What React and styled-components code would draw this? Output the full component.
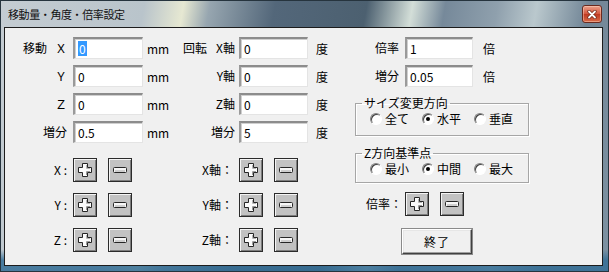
import React from "react";
import styled, { createGlobalStyle } from "styled-components";

const GlobalStyle = createGlobalStyle`
  html, body {
    margin: 0;
    padding: 0;
    background: #6d7f8d;
  }
  body {
    font-family: "Noto Sans CJK JP", "Liberation Sans", sans-serif;
    font-size: 12px;
    color: #000;
  }
`;

const Window = styled.div`
  width: 609px;
  height: 272px;
  box-sizing: border-box;
  display: flex;
  flex-direction: column;
  border: 1px solid #26343e;
  padding: 0 5px 5px 3px;
  background:
    linear-gradient(180deg, rgba(0, 0, 0, 0) 92%, rgba(52, 110, 150, 0.85) 96%),
    linear-gradient(
      100deg,
      #c4ccd2 0%,
      #b9c4cb 22%,
      #e6e8d2 28%,
      #97a6b0 32%,
      #53677a 42%,
      #4c6070 56%,
      #d3ded8 63%,
      #76899a 68%,
      #8fa0ad 76%,
      #bac8cd 82%,
      #718596 90%,
      #7e92a2 100%
    );
`;

const TitleBar = styled.div`
  height: 26px;
  display: flex;
  align-items: flex-start;
  justify-content: space-between;
  padding-left: 4px;
`;

const Title = styled.div`
  margin-top: 5px;
  font-size: 11px;
  line-height: 16px;
  letter-spacing: -0.4px;
  color: #111;
`;

const CloseButton = styled.div`
  width: 20px;
  height: 18px;
  margin-top: 4px;
  margin-right: 1px;
  box-sizing: border-box;
  border: 1px solid #6b2a1f;
  border-radius: 3px;
  display: flex;
  align-items: center;
  justify-content: center;
  background: linear-gradient(180deg, #eca28c 0%, #d4583f 48%, #bf3a22 52%, #d86a47 100%);
  box-shadow: inset 0 0 0 1px rgba(255, 220, 200, 0.45);
`;

const Client = styled.div`
  flex: 1;
  display: flex;
  box-sizing: border-box;
  border: 1px solid #1c1c1c;
  background: #f0f0f0;
  padding-top: 9px;
`;

const LeftPanel = styled.div`
  width: 345px;
  display: flex;
  flex-direction: column;
`;

const FieldGrid = styled.div`
  display: grid;
  grid-template-columns: 68px 70px 38px 58px 69px 1fr;
  grid-auto-rows: 22px;
  row-gap: 6px;
`;

const StepGrid = styled.div`
  display: grid;
  grid-template-columns: 68px 108px 58px 1fr;
  grid-auto-rows: 24px;
  row-gap: 11px;
  margin-top: 15px;
`;

const Label = styled.div`
  display: flex;
  align-items: center;
  justify-content: ${(p) => (p.$split ? "space-between" : "flex-end")};
  gap: 8px;
  padding-right: ${(p) => p.$pr ?? 6}px;
  padding-left: ${(p) => (p.$split ? 2 : 0)}px;
  white-space: nowrap;
  line-height: 16px;
`;

const Unit = styled.div`
  display: flex;
  align-items: center;
  padding-left: ${(p) => p.$pl}px;
  white-space: nowrap;
`;

const TextBox = styled.div`
  box-sizing: border-box;
  height: 22px;
  width: ${(p) => p.$w}px;
  display: flex;
  align-items: center;
  padding-left: 3px;
  background: #fff;
  border-style: solid;
  border-width: 2px 1px 1px 2px;
  border-color: #8c8c8c #e4e4e4 #e4e4e4 #9a9a9a;
  box-shadow: inset 1px 1px 0 #cfcfcf;
  font-size: 12px;
`;

const Selected = styled.span`
  background: #3399ff;
  color: #fff;
  line-height: 15px;
  padding: 0 1px;
`;

const Buttons = styled.div`
  display: flex;
  gap: 11px;
`;

const IconButton = styled.div`
  width: 24px;
  height: 24px;
  box-sizing: border-box;
  display: flex;
  align-items: center;
  justify-content: center;
  background: #c2c2c2;
  border: 1px solid #2b2b2b;
  box-shadow: inset 1px 1px 0 #f4f4f4, inset -1px -1px 0 #7c7c7c;
`;

const RightPanel = styled.div`
  display: flex;
  flex-direction: column;
`;

const RateGrid = styled.div`
  display: grid;
  grid-template-columns: 55px 68px 1fr;
  grid-auto-rows: 22px;
  row-gap: 6px;
`;

const GroupBox = styled.fieldset`
  box-sizing: border-box;
  width: 174px;
  height: ${(p) => p.$h}px;
  margin: ${(p) => p.$mt}px 0 0 5px;
  padding: 0 0 0 6px;
  border: 1px solid #a6a6a6;
  box-shadow: inset 1px 1px 0 #fff, 1px 1px 0 #fff;
`;

const Legend = styled.legend`
  padding: 0 2px;
  font-size: 12px;
  line-height: 14px;
`;

const RadioRow = styled.div`
  display: flex;
  height: 14px;
  margin-top: ${(p) => p.$mt}px;
  padding-left: 8px;
`;

const RadioItem = styled.div`
  width: 52px;
  height: 14px;
  display: flex;
  align-items: center;
  gap: 3px;
  white-space: nowrap;
  line-height: 14px;
`;

const RadioCircle = styled.span`
  width: 12px;
  height: 12px;
  box-sizing: border-box;
  border-radius: 50%;
  background: #fff;
  border: 1px solid;
  border-color: #808080 #fff #fff #808080;
  box-shadow: inset 1px 1px 0 #404040;
  display: flex;
  align-items: center;
  justify-content: center;
  &::after {
    content: "";
    width: 4px;
    height: 4px;
    border-radius: 50%;
    background: ${(p) => (p.$checked ? "#000" : "transparent")};
  }
`;

const RateStep = styled.div`
  display: grid;
  grid-template-columns: 55px 1fr;
  height: 24px;
  margin-top: 9px;
`;

const EndButton = styled.div`
  width: 70px;
  height: 25px;
  box-sizing: border-box;
  margin: 13px 0 0 52px;
  display: flex;
  align-items: center;
  justify-content: center;
  background: #f0f0f0;
  border: 1px solid;
  border-color: #fff #404040 #404040 #fff;
  box-shadow: inset -1px -1px 0 #a0a0a0, inset 1px 1px 0 #e6e6e6, 0 0 0 1px #8a8a8a;
  letter-spacing: 1px;
`;

const PlusIcon = () => (
  <svg width="16" height="16" viewBox="0 0 16 16">
    <polygon
      points="5.5,1.5 10.5,1.5 10.5,5.5 14.5,5.5 14.5,10.5 10.5,10.5 10.5,14.5 5.5,14.5 5.5,10.5 1.5,10.5 1.5,5.5 5.5,5.5"
      fill="#fbfbfb"
      stroke="#262626"
    />
    <polyline points="9.5,3 9.5,6.5 13,6.5" fill="none" stroke="#b5b5b5" />
    <polyline points="13,9.5 9.5,9.5 9.5,13" fill="none" stroke="#9a9a9a" />
  </svg>
);

const MinusIcon = () => (
  <svg width="16" height="16" viewBox="0 0 16 16">
    <rect x="1.5" y="5.5" width="13" height="5" rx="1" fill="#f6f6f6" stroke="#262626" />
    <line x1="3" y1="9" x2="13" y2="9" stroke="#a8a8a8" />
  </svg>
);

const CloseIcon = () => (
  <svg width="10" height="9" viewBox="0 0 10 9">
    <path d="M2 1.5 L8 7.5 M8 1.5 L2 7.5" stroke="#6d2416" strokeWidth="3.2" strokeLinecap="round" />
    <path d="M2 1.5 L8 7.5 M8 1.5 L2 7.5" stroke="#fff" strokeWidth="1.8" strokeLinecap="round" />
  </svg>
);

const Step = () => (
  <Buttons>
    <IconButton>
      <PlusIcon />
    </IconButton>
    <IconButton>
      <MinusIcon />
    </IconButton>
  </Buttons>
);

const moveRows = [
  { left: "移動", axis: "Ｘ", val: "0", rot: "X軸", rotVal: "0", selected: true },
  { axis: "Ｙ", val: "0", rot: "Y軸", rotVal: "0" },
  { axis: "Ｚ", val: "0", rot: "Z軸", rotVal: "0" },
  { axis: "増分", val: "0.5", rot: "増分", rotVal: "5" },
];

const Radio = ({ label, checked }) => (
  <RadioItem>
    <RadioCircle $checked={checked} />
    {label}
  </RadioItem>
);

export default function App() {
  return (
    <>
      <GlobalStyle />
      <Window>
        <TitleBar>
          <Title>移動量・角度・倍率設定</Title>
          <CloseButton>
            <CloseIcon />
          </CloseButton>
        </TitleBar>
        <Client>
          <LeftPanel>
            <FieldGrid>
              {moveRows.map((r, i) => (
                <React.Fragment key={i}>
                  <Label>
                    {r.left && <span>{r.left}</span>}
                    <span>{r.axis}</span>
                  </Label>
                  <TextBox $w={70}>
                    {r.selected ? <Selected>{r.val}</Selected> : r.val}
                  </TextBox>
                  <Unit $pl={4}>mm</Unit>
                  <Label $split={i === 0} $pr={4}>
                    {i === 0 && <span>回転</span>}
                    <span>{r.rot}</span>
                  </Label>
                  <TextBox $w={69}>{r.rotVal}</TextBox>
                  <Unit $pl={8}>度</Unit>
                </React.Fragment>
              ))}
            </FieldGrid>
            <StepGrid>
              {["X", "Y", "Z"].map((a) => (
                <React.Fragment key={a}>
                  <Label>{a} :</Label>
                  <Step />
                  <Label>{a}軸：</Label>
                  <Step />
                </React.Fragment>
              ))}
            </StepGrid>
          </LeftPanel>
          <RightPanel>
            <RateGrid>
              <Label>倍率</Label>
              <TextBox $w={68}>1</TextBox>
              <Unit $pl={10}>倍</Unit>
              <Label>増分</Label>
              <TextBox $w={68}>0.05</TextBox>
              <Unit $pl={10}>倍</Unit>
            </RateGrid>
            <GroupBox $h={40} $mt={9}>
              <Legend>サイズ変更方向</Legend>
              <RadioRow $mt={2}>
                <Radio label="全て" />
                <Radio label="水平" checked />
                <Radio label="垂直" />
              </RadioRow>
            </GroupBox>
            <GroupBox $h={37} $mt={10}>
              <Legend>Z方向基準点</Legend>
              <RadioRow $mt={2}>
                <Radio label="最小" />
                <Radio label="中間" checked />
                <Radio label="最大" />
              </RadioRow>
            </GroupBox>
            <RateStep>
              <Label $pr={3}>倍率：</Label>
              <Step />
            </RateStep>
            <EndButton>終了</EndButton>
          </RightPanel>
        </Client>
      </Window>
    </>
  );
}
